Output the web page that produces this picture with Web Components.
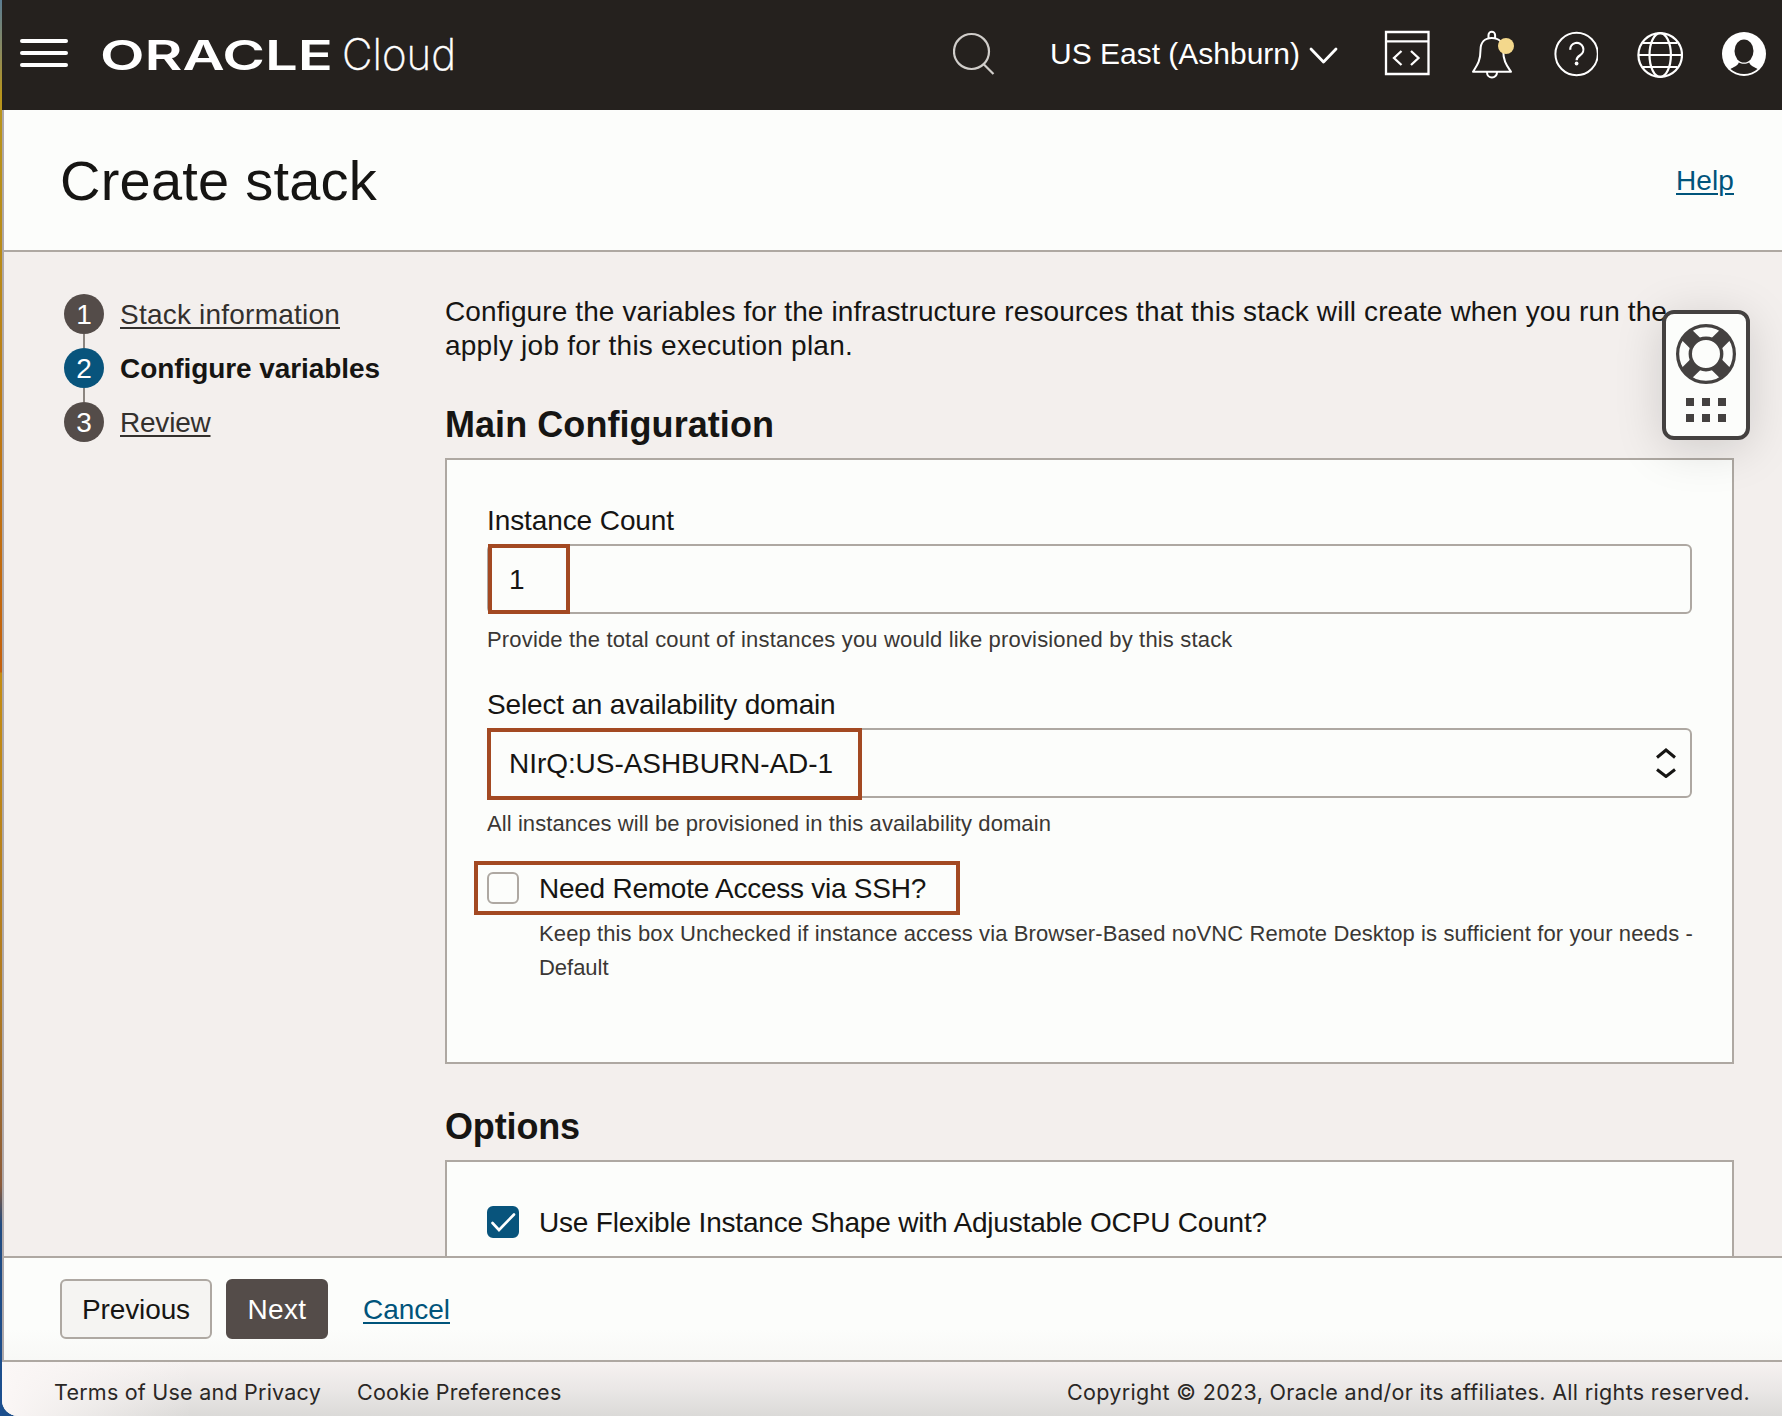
<!DOCTYPE html>
<html lang="en">
<head>
<meta charset="utf-8">
<title>Create stack</title>
<style>
html, body { margin: 0; height: 100%; }
body { font-family: "Liberation Sans", Arial, sans-serif; font-size: 28px; color: #161513; overflow: hidden; }
</style>
</head>
<body>
<stack-wizard></stack-wizard>
<script>
const define = (name, markup, ready) => customElements.define(name, class extends HTMLElement {
  connectedCallback() {
    if (this.shadowRoot) return;
    const t = document.createElement('template');
    t.innerHTML = typeof markup === 'function' ? markup(this) : markup;
    this.attachShadow({ mode: 'open' }).append(t.content.cloneNode(true));
    if (ready) ready(this);
  }
});

/* One line of text, tracked to a given width */
define('fit-text', `<style>:host{display:block;white-space:nowrap;width:max-content}:host([link]) span{text-decoration:underline;text-decoration-thickness:2px;text-underline-offset:3px}</style><span><slot></slot></span>`, el => {
  const want = +el.getAttribute('w');
  const have = el.shadowRoot.querySelector('span').getBoundingClientRect().width;
  const n = el.textContent.length;
  if (want && have) el.style.letterSpacing = ((want - have) / n).toFixed(4) + 'px';
});

define('cloud-header', `
<style>
:host{display:flex;align-items:flex-start;height:110px;background:#25211e;color:#fff;box-sizing:border-box;padding-left:18px}
svg{display:block;flex:none}
.region{margin:34px 9px 0 53px;font-size:30px;line-height:40px}
.menu{margin-top:39px}
.logo{margin:18px 0 0 31px}
.search{margin:32px 0 0 454px}
.icons{display:flex;margin-top:28px;margin-left:46px;gap:32px}
</style>
<svg class="menu" width="48" height="28" fill="#fff"><rect width="48" height="4" rx="2"/><rect y="12" width="48" height="4" rx="2"/><rect y="24" width="48" height="4" rx="2"/></svg>
<svg class="logo" width="400" height="80" fill="#fff">
  <text x="1" y="52" font-family="Inter, sans-serif" font-weight="600" font-size="41" textLength="233" lengthAdjust="spacingAndGlyphs">ORACLE</text>
  <text x="243" y="52" font-family="Inter, sans-serif" font-weight="200" font-size="43.5" textLength="114" lengthAdjust="spacingAndGlyphs" stroke="#fff" stroke-width=".4">Cloud</text>
</svg>
<svg class="search" width="44" height="44" fill="none" stroke="#d0cdca" stroke-width="2.200"><circle cx="18.500" cy="19.500" r="17.500"/><path d="M30.500 32l10 10"/></svg>
<div class="region"><fit-text w="250">US East (Ashburn)</fit-text></div>
<svg style="margin-top:47px" width="29" height="18" fill="none" stroke="#fff" stroke-width="2.800" stroke-linecap="round" stroke-linejoin="round"><path d="M2 2l12.500 13L27 2"/></svg>
<div class="icons">
<svg width="50" height="52" fill="none" stroke="#fff" stroke-width="2.300"><path d="M2 4h42.500v42H2zM2 13.300h42.500"/><path d="M17.500 23l-7.500 7 7.500 7M27 23l7.500 7-7.500 7"/></svg>
<svg style="margin-left:5px" width="46" height="52" fill="none" stroke="#fff" stroke-width="2" stroke-linejoin="round"><path d="M17.500 10V7a3.300 3.300 0 0 1 6.600 0v3M9.500 22c0-7.500 4-12 11.300-12s11.400 4.500 11.400 12c0 12 4 16 7.800 21.700H2C5.500 38 9.500 34 9.500 22zM16 44.500a5 5 0 0 0 10 0"/><circle cx="35" cy="18" r="8" fill="#f4d88c" stroke="none"/></svg>
<svg style="margin-left:3px" width="46" height="52" fill="none" stroke="#fff" stroke-width="2"><circle cx="24.600" cy="26" r="21.200"/><path d="M18.200 21.800a6.600 6.600 0 1 1 9.900 5.400c-2.300 1.400-3.500 2.300-3.500 5" stroke-width="2.200"/><circle cx="24.600" cy="35.500" r="1.900" fill="#fff" stroke="none"/></svg>
<svg style="margin-left:5px" width="48" height="54" fill="none" stroke="#fff" stroke-width="2.200"><circle cx="25.200" cy="27" r="21.800"/><ellipse cx="25.200" cy="27" rx="10.700" ry="21.800"/><path d="M4 27h43M8 15h34.500M8 39h34.500"/></svg>
<svg style="margin-left:4px" width="48" height="54"><circle cx="25" cy="26" r="22" fill="#fff"/><ellipse cx="25" cy="23" rx="9.500" ry="11.500" fill="#25211e"/><path transform="translate(-1)" d="M12.500 41c3-2.200 6.500-2.200 8.300-6.500 3 1.800 7.400 1.800 10.400 0 1.800 4.300 5.300 4.300 8.300 6.500A20.600 20.600 0 0 1 12.500 41z" fill="#25211e"/></svg>
</div>`);

define('page-title', `
<style>
:host{display:flex;align-items:center;justify-content:space-between;height:142px;box-sizing:border-box;border-bottom:2px solid #aea8a2;background:#fcfdfb;padding:0 48px 0 56px}
h1{margin:2px 0 0;font-size:56px;font-weight:400;line-height:64px}
a{color:#00547b;line-height:34px;margin-top:2px}
</style>
<h1><fit-text w="317">Create stack</fit-text></h1><a><fit-text link w="58">Help</fit-text></a>`);

define('wizard-step', el => `
<style>
:host{display:flex;align-items:center;gap:16px;height:40px;color:#33302d}
.n{width:40px;height:40px;border-radius:50%;background:#544c49;color:#fff;text-align:center;line-height:42px;font-size:28px}
.t{line-height:40px;margin-top:2px}
:host([current]) .t{font-weight:700;color:#161513}
:host([current]) .n{background:#08547c}
</style>
<div class="n">${el.getAttribute('n')}</div><div class="t"><slot></slot></div>`);

define('step-list', `
<style>
:host{display:flex;flex-direction:column;flex:none;width:381px;padding-top:42px;box-sizing:border-box}
i{width:2px;height:14px;background:#8b8580;margin-left:19px}
</style>
<wizard-step n="1"><fit-text link w="220">Stack information</fit-text></wizard-step><i></i>
<wizard-step n="2" current><fit-text w="260">Configure variables</fit-text></wizard-step><i></i>
<wizard-step n="3"><fit-text link w="90.500">Review</fit-text></wizard-step>`);

define('config-section', el => `
<style>
:host{display:block}
h2{margin:0;font-size:36px;line-height:46px;font-weight:700}
.card{box-sizing:border-box;border:2px solid #aea8a2;background:#fcfdfb;margin-top:10px;padding:0 40px;height:${el.getAttribute('h')}px}
</style>
<h2><slot name="title"></slot></h2><div class="card"><slot></slot></div>`);

define('form-field', el => `
<style>
:host{display:block}
.label{line-height:34px}
.box{position:relative;display:flex;align-items:center;justify-content:space-between;height:70px;box-sizing:border-box;border:2px solid #aea8a2;border-radius:6px;margin-top:6px;padding:0 13px 0 20px}
.val{line-height:66px;margin-top:1px}
.mark{position:absolute;left:${el.hasAttribute('select') ? -2 : -1}px;top:-2px;width:${el.getAttribute('mw')}px;height:${el.getAttribute('mh')}px;border:4px solid #a34922;box-sizing:border-box}
.hint{font-size:22px;line-height:30px;color:#3a3734;margin-top:11px}
svg{display:block}
</style>
<div class="label"><slot name="label"></slot></div>
<div class="box"><div class="val"><slot name="value"></slot></div>
${el.hasAttribute('select') ? '<svg width="22" height="30" fill="none" stroke="#161513" stroke-width="3"><path d="M2 9.500l9-7.500 9 7.500M2 21.500l9 7 9-7"/></svg>' : ''}
<div class="mark"></div></div>
<div class="hint"><slot name="hint"></slot></div>`);

define('check-option', el => `
<style>
:host{display:block}
.row{position:relative;display:flex;align-items:center;gap:20px;height:34px}
.cb{box-sizing:border-box;width:32px;height:32px;border:2px solid #aea8a2;border-radius:6px;background:#fcfdfb}
:host([checked]) .cb{background:#08547c;border-color:#08547c}
.mark{position:absolute;left:-13px;top:-10px;width:486px;height:54px;border:4px solid #a34922;box-sizing:border-box}
.hint{font-size:22px;line-height:34px;color:#3a3734;margin:12px 0 0 52px}
svg{display:block}
.t{line-height:34px;margin-top:1px}
</style>
<div class="row"><div class="cb">${el.hasAttribute('checked') ? '<svg width="28" height="28" fill="none" stroke="#fff" stroke-width="2.600" stroke-linecap="round"><path d="M3.500 15l6.500 7L25 6.500"/></svg>' : ''}</div><div class="t"><slot></slot></div>${el.hasAttribute('marked') ? '<div class="mark"></div>' : ''}</div>
<div class="hint"><slot name="hint"></slot></div>`);

define('help-widget', `
<style>
:host{position:absolute;left:1662px;top:310px;width:88px;height:130px;box-sizing:border-box;border:4px solid #444140;border-radius:12px;background:#fcfdfb;box-shadow:0 8px 48px rgba(0,0,0,.15)}
svg{display:block}
</style>
<svg width="80" height="122" fill="none" stroke="#444140"><path stroke-width="14.500" d="M29.500 29.500L20.300 20.300M50.500 29.500l9.200-9.200M29.500 50.500l-9.200 9.200M50.500 50.500l9.200 9.200"/><circle cx="40" cy="40" r="28.400" stroke-width="3.200"/><circle cx="40" cy="40" r="15.700" stroke-width="3.400" fill="#fcfdfb"/>
<path stroke="none" fill="#444140" d="M20 84h8v8h-8zM36 84h8v8h-8zM52 84h8v8h-8zM20 100h8v8h-8zM36 100h8v8h-8zM52 100h8v8h-8z"/></svg>`);

define('action-bar', `
<style>
:host{display:flex;align-items:center;height:106px;box-sizing:border-box;border:solid #aea8a2;border-width:2px 0;background:linear-gradient(#fcfdfb 70%,#f8f8f6);padding-left:56px}
button{font:inherit;height:60px;box-sizing:border-box;border:2px solid #aea8a2;border-radius:6px;background:#f5f4f2;color:#161513;padding:2px 0 0;display:flex;justify-content:center;align-items:center}
.next{background:#544c49;border-color:#544c49;color:#fff;margin-left:14px}
a{color:#00547b;margin:2px 0 0 35px}
</style>
<button style="width:152px"><fit-text w="108">Previous</fit-text></button>
<button class="next" style="width:102px"><fit-text w="59">Next</fit-text></button>
<a><fit-text link w="87">Cancel</fit-text></a>`);

define('page-footer', `
<style>
:host{display:flex;height:54px;box-sizing:border-box;padding:14px 32px 0 52px;font:21.500px/32px Inter,sans-serif;color:#2a2725;background:linear-gradient(90deg,#fbf7f6,rgba(251,247,246,0) 190px),linear-gradient(#f6f2f1,#eae7e6 50%,#dbdad8)}
.c{margin-left:36px}.r{margin-left:auto}
</style>
<fit-text w="267">Terms of Use and Privacy</fit-text><fit-text class="c" w="204.500">Cookie Preferences</fit-text><fit-text class="r" w="683">Copyright © 2023, Oracle and/or its affiliates. All rights reserved.</fit-text>`);

define('stack-wizard', `
<style>
:host{display:flex;width:1782px;height:1416px;position:relative;overflow:hidden;background:#1c4f8c}
.edge{flex:none;width:2px;background:linear-gradient(#5b7d92 0,#8a8a60 50px,#b8951c 95px,#b88a18 260px,#c4600c 672px,#c48c12 673px,#b07a20 1000px,#8a5a3a 1185px,#1f4a80 1225px,#1c4f90)}
.app{flex:1;min-width:0;display:flex;flex-direction:column;border-radius:0 0 0 16px;overflow:hidden;background:#f3efed}
.page{border-left:2px solid #aea8a9}
.body{height:1004px;overflow:hidden;display:flex;background:#f3efed;padding:0 48px 0 60px;box-sizing:border-box}
.main{flex:1;min-width:0}
.intro{line-height:34px;padding-top:43px}
</style>
<div class="edge"></div>
<div class="app">
<cloud-header></cloud-header>
<div class="page">
<page-title></page-title>
<div class="body">
<step-list></step-list>
<div class="main">
<div class="intro"><fit-text w="1222">Configure the variables for the infrastructure resources that this stack will create when you run the</fit-text><fit-text w="408">apply job for this execution plan.</fit-text></div>
<config-section h="606" style="margin-top:39px"><fit-text slot="title" w="329">Main Configuration</fit-text>
<form-field mw="82" mh="70" style="padding-top:44px"><fit-text slot="label" w="187">Instance Count</fit-text><fit-text slot="value">1</fit-text><fit-text slot="hint" w="745.500">Provide the total count of instances you would like provisioned by this stack</fit-text></form-field>
<form-field select mw="375" mh="72" style="padding-top:33px"><fit-text slot="label" w="348.500">Select an availability domain</fit-text><fit-text slot="value" w="324">NIrQ:US-ASHBURN-AD-1</fit-text><fit-text slot="hint" w="564">All instances will be provisioned in this availability domain</fit-text></form-field>
<check-option marked style="padding-top:32px"><fit-text w="387">Need Remote Access via SSH?</fit-text><div slot="hint"><fit-text w="1154">Keep this box Unchecked if instance access via Browser-Based noVNC Remote Desktop is sufficient for your needs -</fit-text><fit-text w="69.500">Default</fit-text></div></check-option>
</config-section>
<config-section h="200" style="margin-top:40px"><fit-text slot="title" w="135">Options</fit-text>
<check-option checked style="padding-top:43px"><fit-text w="728">Use Flexible Instance Shape with Adjustable OCPU Count?</fit-text></check-option>
</config-section>
</div>
</div>
<action-bar></action-bar>
</div>
<page-footer></page-footer>
</div>
<help-widget></help-widget>`);
</script>
</body>
</html>
